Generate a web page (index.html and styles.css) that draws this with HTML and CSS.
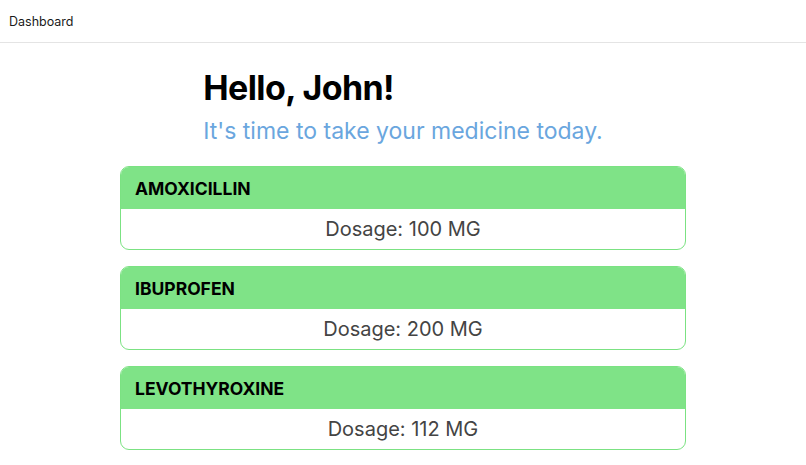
FILE: index.html
```html
<!DOCTYPE html>
<html>
<head>
<meta charset="utf-8">
<link rel="stylesheet" href="styles.css">
</head>
<body>
<header class="topbar">
  <span class="topbar-title">Dashboard</span>
</header>
<main class="content">
  <div class="greeting">
    <h1 class="greeting-title">Hello, John!</h1>
    <p class="greeting-sub">It's time to take your medicine today.</p>
  </div>
  <div class="med-list">
    <div class="med-card">
      <div class="med-name">AMOXICILLIN</div>
      <div class="med-dose">Dosage: 100 MG</div>
    </div>
    <div class="med-card">
      <div class="med-name">IBUPROFEN</div>
      <div class="med-dose">Dosage: 200 MG</div>
    </div>
    <div class="med-card">
      <div class="med-name">LEVOTHYROXINE</div>
      <div class="med-dose">Dosage: 112 MG</div>
    </div>
  </div>
</main>
</body>
</html>
```
FILE: styles.css
```css
* { box-sizing: border-box; }
html, body { margin: 0; padding: 0; background: #fff; }
body { font-family: Inter, "Noto Sans", sans-serif; color: #000; }

.topbar {
  height: 43px;
  display: flex;
  align-items: center;
  padding: 0 9px;
  border-bottom: 1px solid #e4e4e4;
}
.topbar-title { font-size: 12.5px; color: #1a1a1a; }

.content {
  display: flex;
  flex-direction: column;
  align-items: center;
  padding-top: 22px;
}
.greeting { width: fit-content; }
.greeting-title {
  margin: 0;
  font-size: 34px;
  font-weight: 700;
  letter-spacing: -0.6px;
  line-height: 46px;
}
.greeting-sub {
  margin: 4px 0 0;
  font-size: 23px;
  line-height: 32px;
  color: #6aa6de;
}

.med-list {
  margin-top: 19px;
  width: 566px;
  display: flex;
  flex-direction: column;
  gap: 16px;
}
.med-card {
  border: 1px solid #7be282;
  border-radius: 9px;
  overflow: hidden;
}
.med-name {
  background: #7fe387;
  height: 42px;
  display: flex;
  align-items: center;
  padding-left: 14px;
  font-size: 17.5px;
  font-weight: 700;
}
.med-dose {
  height: 40px;
  display: flex;
  align-items: center;
  justify-content: center;
  font-size: 20px;
  color: #444;
}
```
